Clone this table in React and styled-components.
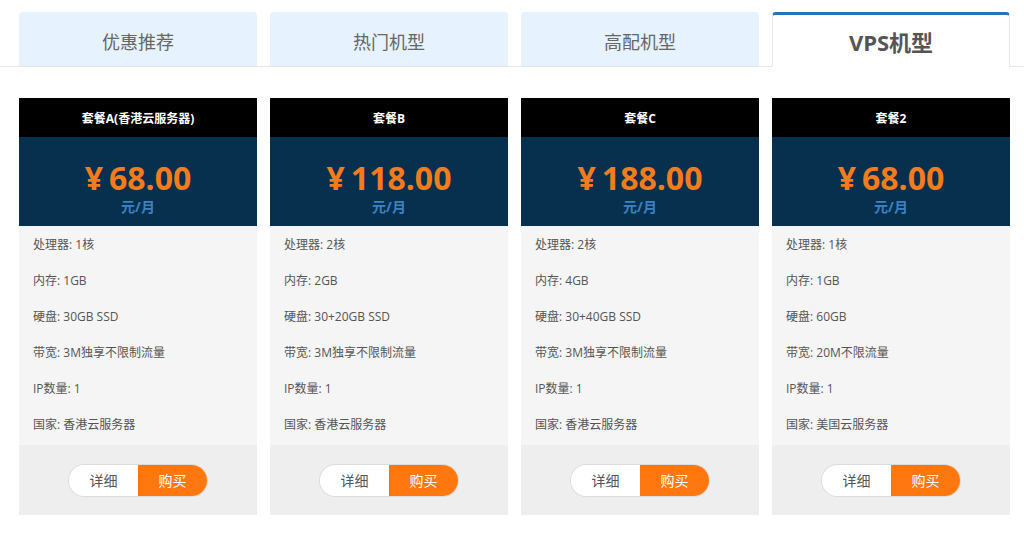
import { useState } from "react";
import styled, { createGlobalStyle } from "styled-components";

const GlobalStyle = createGlobalStyle`
  body {
    margin: 0;
    background: #fff;
    font-family: "Open Sans", "Noto Sans CJK SC", sans-serif;
  }
`;

const tabs = ["优惠推荐", "热门机型", "高配机型", "VPS机型"];

const plans = [
  {
    name: "套餐A(香港云服务器)",
    price: "68.00",
    specs: ["处理器: 1核", "内存: 1GB", "硬盘: 30GB SSD", "带宽: 3M独享不限制流量", "IP数量: 1", "国家: 香港云服务器"],
  },
  {
    name: "套餐B",
    price: "118.00",
    specs: ["处理器: 2核", "内存: 2GB", "硬盘: 30+20GB SSD", "带宽: 3M独享不限制流量", "IP数量: 1", "国家: 香港云服务器"],
  },
  {
    name: "套餐C",
    price: "188.00",
    specs: ["处理器: 2核", "内存: 4GB", "硬盘: 30+40GB SSD", "带宽: 3M独享不限制流量", "IP数量: 1", "国家: 香港云服务器"],
  },
  {
    name: "套餐2",
    price: "68.00",
    specs: ["处理器: 1核", "内存: 1GB", "硬盘: 60GB", "带宽: 20M不限流量", "IP数量: 1", "国家: 美国云服务器"],
  },
];

export default function App() {
  const [active, setActive] = useState(3);

  return (
    <>
      <GlobalStyle />
      <Page>
        <TabBar>
          <TabRow>
            {tabs.map((t, i) => (
              <Tab key={t} $active={i === active} onClick={() => setActive(i)}>
                {t}
              </Tab>
            ))}
          </TabRow>
        </TabBar>
        <CardGrid>
          {plans.map((p) => (
            <Card key={p.name}>
              <CardHead>{p.name}</CardHead>
              <PriceBox>
                <Price>
                  <Yen>¥</Yen>
                  {p.price}
                </Price>
                <Unit>元/月</Unit>
              </PriceBox>
              <SpecList>
                {p.specs.map((s) => (
                  <li key={s}>{s}</li>
                ))}
              </SpecList>
              <CardFoot>
                <Pill>
                  <PillButton>详细</PillButton>
                  <PillButton $primary>购买</PillButton>
                </Pill>
              </CardFoot>
            </Card>
          ))}
        </CardGrid>
      </Page>
    </>
  );
}

const Page = styled.div`
  width: 1024px;
  padding-top: 12px;
`;

const TabBar = styled.div`
  border-bottom: 1px solid #e6e6e6;
`;

const TabRow = styled.div`
  display: grid;
  grid-template-columns: repeat(4, 238px);
  column-gap: 13px;
  margin-left: 19px;
  margin-bottom: -1px;
`;

const Tab = styled.div`
  height: 55px;
  box-sizing: border-box;
  display: flex;
  align-items: center;
  justify-content: center;
  border-radius: 4px 4px 0 0;
  cursor: pointer;
  background: ${(p) => (p.$active ? "#fff" : "#e6f2fd")};
  border: ${(p) => (p.$active ? "1px solid #e6e6e6" : "none")};
  border-top: ${(p) => (p.$active ? "3px solid #2673b5" : "none")};
  border-bottom: ${(p) => (p.$active ? "1px solid #fff" : "1px solid #e6e6e6")};
  color: ${(p) => (p.$active ? "#555" : "#666")};
  font-size: ${(p) => (p.$active ? "22px" : "18px")};
  font-weight: ${(p) => (p.$active ? 700 : 400)};
  padding-top: ${(p) => (p.$active ? "0" : "3px")};
`;

const CardGrid = styled.div`
  display: grid;
  grid-template-columns: repeat(4, 238px);
  column-gap: 13px;
  margin: 31px 0 0 19px;
`;

const Card = styled.div`
  display: flex;
  flex-direction: column;
`;

const CardHead = styled.div`
  height: 39px;
  background: #000;
  color: #fff;
  font-size: 12px;
  font-weight: 700;
  display: flex;
  align-items: center;
  justify-content: center;
`;

const PriceBox = styled.div`
  height: 89px;
  background: #07304f;
  display: flex;
  flex-direction: column;
  align-items: center;
  justify-content: center;
  padding-top: 12px;
  box-sizing: border-box;
`;

const Price = styled.div`
  color: #f67b1c;
  font-size: 32px;
  font-weight: 700;
  line-height: 38px;
`;

const Yen = styled.span`
  margin-right: 6px;
`;

const Unit = styled.div`
  color: #3b82c2;
  font-size: 14px;
  font-weight: 700;
  line-height: 20px;
`;

const SpecList = styled.ul`
  list-style: none;
  margin: 0;
  padding: 1px 14px 2px;
  background: #f5f5f5;

  li {
    font-size: 12px;
    color: #555;
    line-height: 36px;
  }
`;

const CardFoot = styled.div`
  height: 70px;
  background: #eeeeee;
  display: flex;
  align-items: center;
  justify-content: center;
`;

const Pill = styled.div`
  display: flex;
  height: 31px;
  border-radius: 16px;
  overflow: hidden;
  box-shadow: 0 0 0 1px #dcdcdc;
`;

const PillButton = styled.button`
  width: 69px;
  border: none;
  padding: 0;
  font-family: inherit;
  font-size: 14px;
  cursor: pointer;
  background: ${(p) => (p.$primary ? "#ff770f" : "#fff")};
  color: ${(p) => (p.$primary ? "#fff" : "#555")};
`;
